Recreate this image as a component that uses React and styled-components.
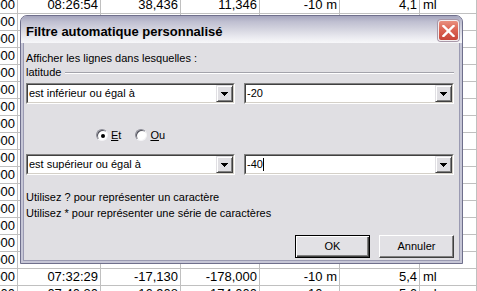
import React from 'react'
import styled, { createGlobalStyle } from 'styled-components'

const GlobalStyle = createGlobalStyle`
  html, body {
    margin: 0;
    padding: 0;
    background: #fff;
    overflow: hidden;
  }
`

const Screen = styled.div`
  position: relative;
  width: 477px;
  height: 291px;
  overflow: hidden;
  background: #fff;
`

const Sheet = styled.div`
  margin-top: -3px;
  font-family: "Liberation Sans", Arial, sans-serif;
  font-size: 13px;
  color: #000;
`

const Row = styled.div`
  display: grid;
  grid-template-columns: 18px 83px 80px 79px 80px 80px 1fr;
  height: 17px;
  box-sizing: border-box;
  border-bottom: 1px solid #c0c0c0;
`

const Cell = styled.div`
  display: flex;
  justify-content: ${p => (p.$left ? 'flex-start' : 'flex-end')};
  padding: ${p => (p.$left ? '0 0 0 3px' : '0 2px 0 0')};
  border-right: 1px solid #c0c0c0;
  overflow: hidden;
  white-space: nowrap;
  line-height: 16px;
`

const Window = styled.div`
  position: absolute;
  left: 20px;
  top: 15px;
  width: 443px;
  height: 249px;
  box-sizing: border-box;
  border: 1px solid #6f6f8c;
  border-radius: 7px 7px 0 0;
  background: #c6c6d6;
  display: flex;
  flex-direction: column;
  overflow: hidden;
  font-family: "Liberation Sans", Arial, sans-serif;
  color: #000;
`

const TitleBar = styled.div`
  flex: none;
  height: 27px;
  display: flex;
  justify-content: space-between;
  align-items: flex-start;
  padding: 0 3px 0 5px;
  background: linear-gradient(#a4a4bc 0%, #bebed0 20%, #d5d5e0 50%, #eaeaf0 78%, #f8f8fa 100%);
`

const Title = styled.div`
  margin-top: 8px;
  font-size: 13px;
  font-weight: bold;
  line-height: 15px;
`

const CloseButton = styled.div`
  margin-top: 4px;
  width: 21px;
  height: 21px;
  box-sizing: border-box;
  border: 1px solid #f3eef0;
  border-radius: 3px;
  background: linear-gradient(#e9907f 0%, #dc6655 45%, #c8463a 100%);
  box-shadow: 0 0 0 1px #a898a8;
  display: flex;
  align-items: center;
  justify-content: center;
`

const Frame = styled.div`
  flex: 1;
  display: flex;
  padding: 0 2px 2px;
`

const Body = styled.div`
  flex: 1;
  display: flex;
  flex-direction: column;
  background: #e0dfe3;
  border: 1px solid #9a9ab2;
  border-top: none;
  padding: 9px 5px 0 2px;
  font-size: 11px;
  line-height: 13px;
`

const Line = styled.div`
  margin-top: ${p => p.$gap || 0}px;
  white-space: nowrap;
`

const GroupRow = styled.div`
  margin-top: 1px;
  display: flex;
  align-items: center;
  gap: 4px;
`

const Rule = styled.div`
  flex: 1;
  height: 0;
  border-top: 1px solid #a3a3ab;
  border-bottom: 1px solid #fff;
`

const ComboRow = styled.div`
  margin-top: ${p => p.$gap}px;
  display: grid;
  grid-template-columns: 209px 1fr;
  gap: 9px;
`

const Combo = styled.div`
  height: 21px;
  box-sizing: border-box;
  display: flex;
  border: 1px solid;
  border-color: #808080 #fff #fff #808080;
`

const ComboInner = styled.div`
  flex: 1;
  display: flex;
  background: #fff;
  border: 1px solid;
  border-color: #404040 #d4d0c8 #d4d0c8 #404040;
`

const ComboText = styled.div`
  flex: 1;
  display: flex;
  align-items: center;
  padding-left: 1px;
  line-height: 17px;
  white-space: nowrap;
`

const Caret = styled.span`
  display: inline-block;
  width: 0;
  height: 13px;
  border-left: 1px solid #000;
`

const DropButton = styled.div`
  width: 17px;
  box-sizing: border-box;
  background: #e0dfe3;
  border: 1px solid;
  border-color: #e0dfe3 #404040 #404040 #e0dfe3;
  box-shadow: inset 1px 1px #fff, inset -1px -1px #808080;
  display: flex;
  align-items: center;
  justify-content: center;
`

const RadioRow = styled.div`
  margin-top: 24px;
  height: 14px;
  display: flex;
  align-items: center;
  gap: 14px;
  padding-left: 70px;
`

const RadioOption = styled.label`
  display: inline-flex;
  align-items: center;
  gap: 3px;
`

const RadioCircle = styled.span`
  width: 12px;
  height: 12px;
  box-sizing: border-box;
  border-radius: 50%;
  background: #fff;
  border: 1px solid;
  border-color: #8a8a94 #f4f4f6 #f4f4f6 #8a8a94;
  box-shadow: inset 1px 1px #50505a;
  display: flex;
  align-items: center;
  justify-content: center;

  &::after {
    content: '';
    display: ${p => (p.$checked ? 'block' : 'none')};
    width: 4px;
    height: 4px;
    margin: 1px 0 0 1px;
    border-radius: 50%;
    background: #000;
  }
`

const ButtonRow = styled.div`
  margin-top: 15px;
  display: flex;
  justify-content: flex-end;
  gap: 9px;
`

const Button = styled.div`
  width: 75px;
  height: 23px;
  box-sizing: border-box;
  display: flex;
  align-items: center;
  justify-content: center;
  background: #e2e1e5;
  font-size: 11px;
  border: 1px solid;
  border-color: ${p => (p.$default ? '#000' : '#fff #404040 #404040 #fff')};
  box-shadow: ${p =>
    p.$default
      ? 'inset 1px 1px #fff, inset -1px -1px #404040, inset -2px -2px #808080'
      : 'inset -1px -1px #808080'};
`

// rows hidden behind the dialog only show their first column
const hidden = ['000', '', '', '', '', '', '']

const rows = [
  ['000', '08:26:54', '38,436', '11,346', '-10 m', '4,1', 'ml'],
  ...Array.from({ length: 15 }, () => hidden),
  ['000', '07:32:29', '-17,130', '-178,000', '-10 m', '5,4', 'ml'],
  ['000', '07:40:30', '-16,908', '-174,000', '-10 m', '5,6', 'ml'],
]

const Arrow = () => (
  <svg width="7" height="4" viewBox="0 0 7 4" shapeRendering="crispEdges">
    <polygon points="0,0 7,0 3.5,4" fill="#000" />
  </svg>
)

const CloseIcon = () => (
  <svg width="13" height="12" viewBox="0 0 13 12">
    <path d="M1.5 1 L11.5 11 M11.5 1 L1.5 11" stroke="#fff" strokeWidth="2.4" strokeLinecap="square" />
  </svg>
)

const ComboBox = ({ children }) => (
  <Combo>
    <ComboInner>
      <ComboText>{children}</ComboText>
      <DropButton>
        <Arrow />
      </DropButton>
    </ComboInner>
  </Combo>
)

export default function App() {
  return (
    <Screen>
      <GlobalStyle />
      <Sheet>
        {rows.map((r, i) => (
          <Row key={i}>
            {r.map((v, j) => (
              <Cell key={j} $left={j === 6}>{v}</Cell>
            ))}
          </Row>
        ))}
      </Sheet>

      <Window>
        <TitleBar>
          <Title>Filtre automatique personnalisé</Title>
          <CloseButton>
            <CloseIcon />
          </CloseButton>
        </TitleBar>
        <Frame>
          <Body>
            <Line>Afficher les lignes dans lesquelles :</Line>
            <GroupRow>
              <span>latitude</span>
              <Rule />
            </GroupRow>
            <ComboRow $gap={4}>
              <ComboBox>est inférieur ou égal à</ComboBox>
              <ComboBox>-20</ComboBox>
            </ComboRow>
            <RadioRow>
              <RadioOption>
                <RadioCircle $checked />
                <span><u>E</u>t</span>
              </RadioOption>
              <RadioOption>
                <RadioCircle />
                <span><u>O</u>u</span>
              </RadioOption>
            </RadioRow>
            <ComboRow $gap={12}>
              <ComboBox>est supérieur ou égal à</ComboBox>
              <ComboBox>-40<Caret /></ComboBox>
            </ComboRow>
            <Line $gap={16}>Utilisez ? pour représenter un caractère</Line>
            <Line $gap={3}>Utilisez * pour représenter une série de caractères</Line>
            <ButtonRow>
              <Button $default>OK</Button>
              <Button>Annuler</Button>
            </ButtonRow>
          </Body>
        </Frame>
      </Window>
    </Screen>
  )
}
